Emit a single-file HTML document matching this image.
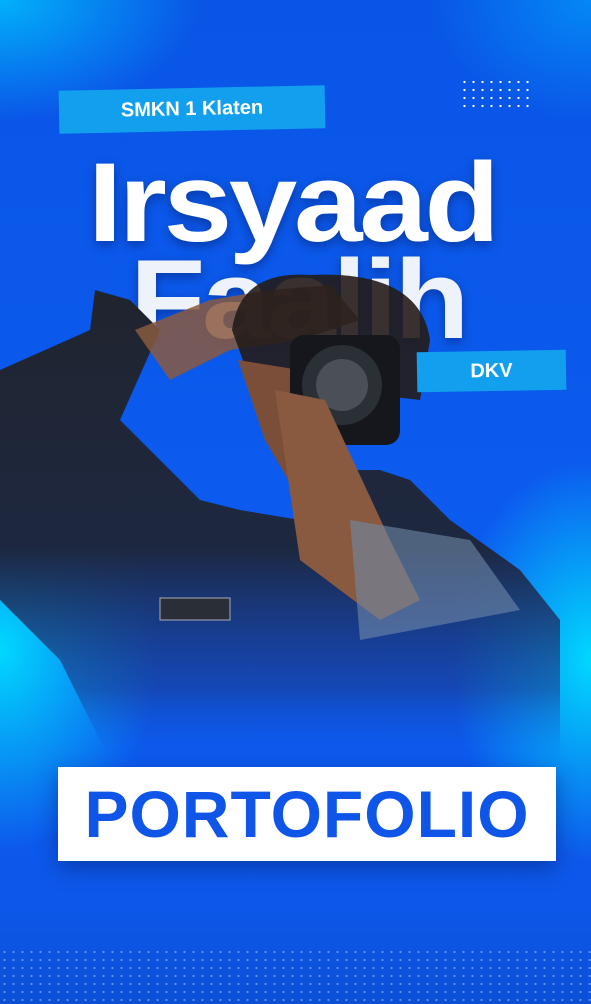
<!DOCTYPE html>
<html><head><style>
*{margin:0;padding:0;box-sizing:border-box}
body{width:591px;height:1004px;overflow:hidden;position:relative;background:#0d58e8;font-family:"Liberation Sans",sans-serif}
.abs{position:absolute}
.bg{inset:0;background:
radial-gradient(ellipse 160px 200px at 0px 650px,rgba(0,230,255,.9),rgba(0,200,255,0) 100%),
radial-gradient(ellipse 140px 200px at 591px 660px,rgba(0,230,255,.9),rgba(0,200,255,0) 100%),
radial-gradient(ellipse 200px 120px at 0px 0px,rgba(0,200,255,.8),rgba(0,200,255,0) 100%),
radial-gradient(ellipse 160px 120px at 591px 0px,rgba(0,170,255,.6),rgba(0,200,255,0) 100%),
linear-gradient(#0a55e6,#0c5cf0 60%,#0d58ea 90%,#0b4fd6)}
.dots{background-image:radial-gradient(circle,#fff 1px,transparent 1.3px);background-size:9px 8px}
.tag{background:#12a0ee;color:#fff;font-weight:bold;display:flex;align-items:center;justify-content:center}
.name{color:#fff;font-weight:bold;font-size:112px;letter-spacing:-3px;text-shadow:0 4px 10px rgba(0,0,40,.35);white-space:nowrap}
</style></head><body>
<div class="abs bg"></div>
<div class="abs dots" style="left:460px;top:78px;width:72px;height:30px"></div>
<div class="abs dots" style="left:36px;top:460px;width:72px;height:30px"></div>
<div class="abs dots" style="left:0;top:948px;width:591px;height:56px;opacity:.35"></div>
<div class="abs tag" style="left:59px;top:88px;width:266px;height:43px;transform:rotate(-1.2deg);font-size:20px">SMKN 1 Klaten</div>
<div class="abs name" style="left:88px;top:138px;transform:scaleX(1.1);transform-origin:left">Irsyaad</div>
<div class="abs name" style="left:130px;top:235px;transform:scaleX(1.1);transform-origin:left;color:#eef2fb">Faalih</div>
<svg class="abs" style="left:0;top:0" width="591" height="1004">
<defs>
<linearGradient id="jk" x1="0" y1="0" x2="0" y2="1"><stop offset="0" stop-color="#20242e"/><stop offset=".55" stop-color="#1d2840"/><stop offset=".85" stop-color="#1a3a90" stop-opacity=".6"/><stop offset="1" stop-color="#0d58e8" stop-opacity="0"/></linearGradient></defs>
<path d="M0 370 L90 330 L95 290 L130 300 L160 330 L120 420 L200 500 L240 510 L300 520 L320 470 L380 470 L410 480 L450 520 L520 570 L560 620 L560 760 L110 760 L60 660 L0 600 Z" fill="url(#jk)"/>
<path d="M135 330 L210 300 L270 290 L330 285 L360 320 L300 340 L230 350 L170 380 Z" fill="#8a5a40" opacity=".85"/>
<path d="M232 330 Q240 270 310 275 Q420 270 430 340 L420 400 L250 380 Z" fill="#241c18" opacity=".9"/>
<path d="M238 360 L265 440 L300 500 L340 480 L300 370 Z" fill="#7a4e38"/>
<rect x="290" y="335" width="110" height="110" rx="14" fill="#15171c"/>
<circle cx="342" cy="385" r="40" fill="#2b2f36"/><circle cx="342" cy="385" r="26" fill="#4b5058"/>
<path d="M275 390 L325 400 L390 540 L420 600 L380 620 L300 560 Z" fill="#8a5a40"/>
<path d="M350 520 L470 540 L520 610 L360 640 Z" fill="#6f88a8" opacity=".6"/>
<rect x="160" y="598" width="70" height="22" fill="#2a2e36" stroke="#aab" stroke-width="1"/>
</svg>
<div class="abs tag" style="left:417px;top:351px;width:149px;height:40px;transform:rotate(-1deg);font-size:20px">DKV</div>
<div class="abs" style="left:58px;top:767px;width:498px;height:94px;background:#fff;box-shadow:0 8px 20px rgba(0,20,90,.4);display:flex;align-items:center;justify-content:center;color:#0f55e8;font-weight:bold;font-size:66px;letter-spacing:1px">PORTOFOLIO</div>
</body></html>
